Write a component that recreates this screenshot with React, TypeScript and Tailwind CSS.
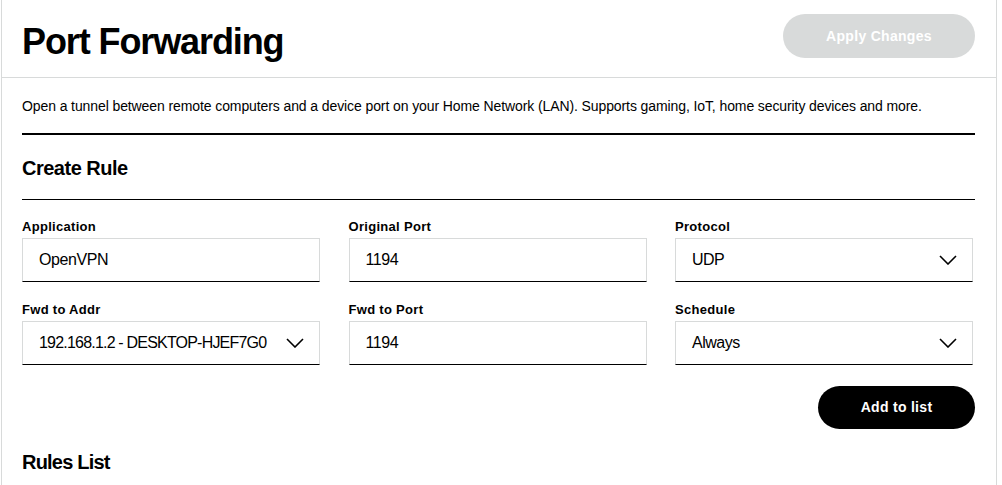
import { useState } from 'react';

const FONT = { fontFamily: '"Liberation Sans", Arial, sans-serif' };

function Chevron() {
  return (
    <svg width="18" height="10" viewBox="0 0 18 10" fill="none" className="shrink-0">
      <polyline points="1,1 9,9 17,1" stroke="#000" strokeWidth="1.6" />
    </svg>
  );
}

function Field({ label, children }: { label: string; children: React.ReactNode }) {
  return (
    <div>
      <div className="mb-[3px] text-[13px] font-bold leading-[16px] tracking-[0.3px] text-black">{label}</div>
      <div className="flex h-[44px] items-center border border-b-black border-[#d8dada] bg-white pl-[16px] pr-[15px]">
        {children}
      </div>
    </div>
  );
}

function TextValue({ value }: { value: string }) {
  return <span className="text-[16px] tracking-[-0.4px] text-black">{value}</span>;
}

function SelectValue({ value, tight }: { value: string; tight?: boolean }) {
  return (
    <div className="flex w-full items-center justify-between">
      <span
        className={`whitespace-nowrap text-[16px] text-black ${tight ? 'tracking-[-0.8px]' : 'tracking-[-0.5px]'}`}
      >
        {value}
      </span>
      <Chevron />
    </div>
  );
}

export default function App() {
  const [rule] = useState({
    application: 'OpenVPN',
    originalPort: '1194',
    protocol: 'UDP',
    fwdAddr: '192.168.1.2 - DESKTOP-HJEF7G0',
    fwdPort: '1194',
    schedule: 'Always',
  });

  return (
    <div className="min-h-[485px] bg-white pl-px" style={FONT}>
      <div className="min-h-[485px] w-[996px] border-x border-[#d8dada]">
        <header className="flex h-[78px] items-start justify-between border-b border-[#d8dada] pl-[20px] pr-[21px]">
          <h1 className="mt-[24px] text-[36px] font-bold leading-[36px] tracking-[-1.1px] text-black">
            Port Forwarding
          </h1>
          <button
            type="button"
            disabled
            className="mt-[14px] h-[44px] w-[192px] rounded-full bg-[#d8dada] text-[14px] font-bold tracking-[0.3px] text-white"
          >
            Apply Changes
          </button>
        </header>

        <div className="pl-[20px] pr-[21px]">
          <p className="mt-[18px] text-[14px] leading-[20px] tracking-[-0.1px] text-black">
            Open a tunnel between remote computers and a device port on your Home Network (LAN). Supports gaming, IoT,
            home security devices and more.
          </p>

          <div className="mt-[17px] h-[2px] bg-black" />

          <h2 className="mt-[21px] text-[20px] font-bold leading-[24px] tracking-[-0.5px] text-black">Create Rule</h2>
          <div className="mt-[19px] h-px bg-black" />

          <div className="mt-[19px] grid w-[951px] grid-cols-3 gap-x-[28.5px] gap-y-[20px]">
            <Field label="Application">
              <TextValue value={rule.application} />
            </Field>
            <Field label="Original Port">
              <TextValue value={rule.originalPort} />
            </Field>
            <Field label="Protocol">
              <SelectValue value={rule.protocol} />
            </Field>
            <Field label="Fwd to Addr">
              <SelectValue value={rule.fwdAddr} tight />
            </Field>
            <Field label="Fwd to Port">
              <TextValue value={rule.fwdPort} />
            </Field>
            <Field label="Schedule">
              <SelectValue value={rule.schedule} />
            </Field>
          </div>

          <div className="mt-[21px] flex justify-end">
            <button
              type="button"
              className="h-[43px] w-[157px] rounded-full bg-black text-[14px] font-bold tracking-[0.3px] text-white"
            >
              Add to list
            </button>
          </div>

          <h2 className="mt-[21px] text-[20px] font-bold leading-[24px] tracking-[-0.8px] text-black">Rules List</h2>
        </div>
      </div>
    </div>
  );
}
